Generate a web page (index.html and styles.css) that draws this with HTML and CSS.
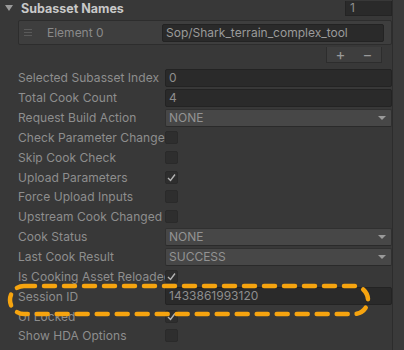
FILE: index.html
```html
<!DOCTYPE html>
<html>
<head>
<meta charset="utf-8">
<link rel="stylesheet" href="styles.css">
</head>
<body>
<div class="inspector">
  <div class="content">
    <div class="header">
      <span class="foldout"></span>
      <span class="title">Subasset Names</span>
      <span class="count">1</span>
    </div>
    <div class="list">
      <span class="handle"><i></i><i></i><i></i></span>
      <span class="el-label">Element 0</span>
      <span class="el-field">Sop/Shark_terrain_complex_tool</span>
    </div>
    <div class="list-footer"><span class="plus">+</span><span class="minus">−</span></div>

    <div class="rows">
      <div class="row"><span class="label">Selected Subasset Index</span><span class="field">0</span></div>
      <div class="row"><span class="label">Total Cook Count</span><span class="field">4</span></div>
      <div class="row"><span class="label">Request Build Action</span><span class="dropdown">NONE<span class="arrow"></span></span></div>
      <div class="row"><span class="label">Check Parameter Change</span><span class="check"></span></div>
      <div class="row"><span class="label">Skip Cook Check</span><span class="check"></span></div>
      <div class="row"><span class="label">Upload Parameters</span><span class="check"><svg viewBox="0 0 13 13" width="13" height="13"><polyline points="3,7 5.5,9.5 10,3.5" fill="none" stroke="#b4b4b4" stroke-width="1.4"/></svg></span></div>
      <div class="row"><span class="label">Force Upload Inputs</span><span class="check"></span></div>
      <div class="row"><span class="label">Upstream Cook Changed</span><span class="check"></span></div>
      <div class="row"><span class="label">Cook Status</span><span class="dropdown">NONE<span class="arrow"></span></span></div>
      <div class="row"><span class="label">Last Cook Result</span><span class="dropdown">SUCCESS<span class="arrow"></span></span></div>
      <div class="row"><span class="label">Is Cooking Asset Reloaded</span><span class="check"><svg viewBox="0 0 13 13" width="13" height="13"><polyline points="3,7 5.5,9.5 10,3.5" fill="none" stroke="#b4b4b4" stroke-width="1.4"/></svg></span></div>
      <div class="row"><span class="label">Session ID</span><span class="field">1433861993120</span></div>
      <div class="row"><span class="label">UI Locked</span><span class="check"><svg viewBox="0 0 13 13" width="13" height="13"><polyline points="3,7 5.5,9.5 10,3.5" fill="none" stroke="#b4b4b4" stroke-width="1.4"/></svg></span></div>
      <div class="row"><span class="label">Show HDA Options</span><span class="check"></span></div>
    </div>
  </div>
  <div class="gutter"></div>
  <svg class="highlight" width="364" height="34" viewBox="0 0 364 34">
    <rect x="3" y="3" width="358" height="28" rx="14" ry="14" fill="none" stroke="#f6a40f" stroke-width="4.5" stroke-dasharray="11 9" stroke-linecap="round"/>
  </svg>
</div>
</body>
</html>
```
FILE: styles.css
```css
* { box-sizing: border-box; }
html, body { margin: 0; padding: 0; background: #383838; }
body {
  font-family: Inter, "Noto Sans", sans-serif;
  font-size: 12px;
  color: #8e8e8e;
}
.inspector {
  position: relative;
  width: 404px;
  height: 350px;
  overflow: hidden;
  display: flex;
  background: #383838;
}
.content {
  width: 392px;
  display: flex;
  flex-direction: column;
}
.gutter {
  width: 12px;
  border-left: 1px solid #2c2c2c;
  background: #3a3a3a;
}
.header {
  height: 16px;
  display: flex;
  align-items: center;
}
.foldout {
  width: 0; height: 0;
  margin-left: 5px;
  margin-right: 8px;
  border-left: 4px solid transparent;
  border-right: 4px solid transparent;
  border-top: 6px solid #9a9a9a;
}
.title {
  font-weight: 700;
  color: #c8c8c8;
  font-size: 12.5px;
}
.count {
  margin-left: auto;
  width: 47px;
  height: 15px;
  background: #2a2a2a;
  border: 1px solid #242424;
  border-top: 0;
  padding-left: 4px;
  line-height: 14px;
  color: #8e8e8e;
}
.list {
  margin-top: 4px;
  margin-left: 18px;
  height: 25px;
  background: #3e3e3e;
  border: 1px solid #2d2d2d;
  border-radius: 2px;
  display: flex;
  align-items: center;
}
.handle {
  width: 8px;
  margin-left: 5px;
  display: flex;
  flex-direction: column;
  gap: 2px;
}
.handle i {
  display: block;
  height: 1px;
  background: #5a5a5a;
}
.el-label {
  margin-left: 15px;
  width: 115px;
  color: #8a8a8a;
}
.el-field {
  width: 222px;
  height: 18px;
  background: #2a2a2a;
  border: 1px solid #232323;
  border-radius: 2px;
  padding-left: 3px;
  line-height: 16px;
  color: #9a9a9a;
}
.list-footer {
  align-self: flex-end;
  margin-right: 10px;
  margin-top: 2px;
  width: 56px;
  height: 16px;
  background: #3e3e3e;
  border: 1px solid #2d2d2d;
  border-top: 0;
  display: flex;
  align-items: center;
  justify-content: space-around;
  color: #9a9a9a;
  font-size: 15px;
  line-height: 14px;
}
.rows {
  margin-top: 5px;
  display: flex;
  flex-direction: column;
}
.row {
  height: 19.85px;
  display: flex;
  align-items: center;
}
.label {
  width: 147px;
  margin-left: 18px;
  white-space: nowrap;
  overflow: hidden;
  color: #8e8e8e;
  letter-spacing: 0.05px;
}
.field {
  flex: 1;
  height: 18px;
  background: #2a2a2a;
  border: 1px solid #232323;
  border-radius: 2px;
  padding-left: 3px;
  line-height: 16px;
  color: #8e8e8e;
}
.dropdown {
  flex: 1;
  height: 18px;
  background: #474747;
  border: 1px solid #303030;
  border-bottom-color: #2a2a2a;
  border-radius: 2px;
  padding-left: 3px;
  line-height: 16px;
  color: #939393;
  display: flex;
  align-items: center;
}
.arrow {
  margin-left: auto;
  margin-right: 5px;
  width: 0; height: 0;
  border-left: 4px solid transparent;
  border-right: 4px solid transparent;
  border-top: 4px solid #9a9a9a;
}
.check {
  width: 13px;
  height: 13px;
  background: #2e2e2e;
  border: 1px solid #2a2a2a;
  border-radius: 2px;
  position: relative;
}
.check svg {
  position: absolute;
  left: -1px;
  top: -1px;
}
.highlight {
  position: absolute;
  left: 7px;
  top: 283px;
}
```
